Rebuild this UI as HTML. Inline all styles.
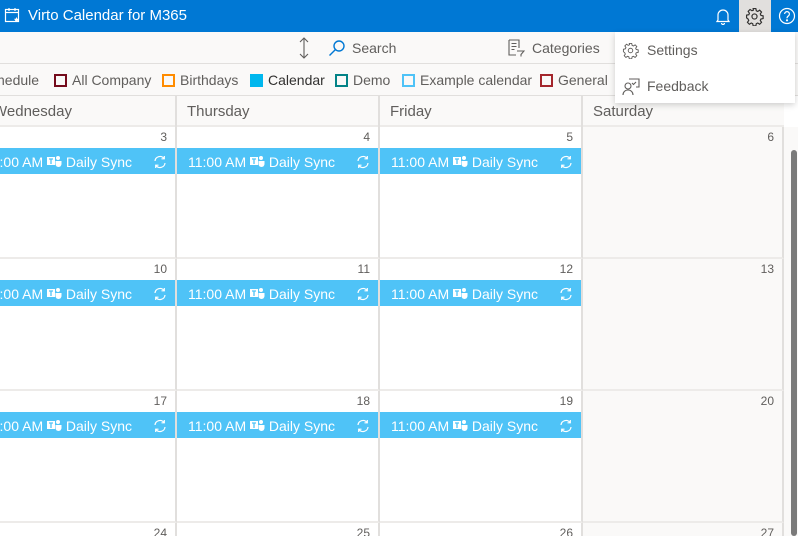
<!DOCTYPE html>
<html><head><meta charset="utf-8"><style>
*{margin:0;padding:0;box-sizing:border-box}
html,body{width:798px;height:536px;overflow:hidden}
body{background:#fff;font-family:"Segoe UI","Liberation Sans",sans-serif;font-size:14px;color:#605e5c;position:relative}
.abs{position:absolute}
.hdr{left:0;top:0;width:798px;height:32px;background:#0078d4;color:#fff}
.tb{left:0;top:32px;width:798px;height:32px;background:#faf9f8;border-bottom:1px solid #e1dfdd}
.lg{left:0;top:64px;width:798px;height:32px;background:#faf9f8;border-bottom:1px solid #e1dfdd}
.dh{left:0;top:96px;width:784px;height:31px;background:#faf9f8;border-bottom:2px solid #edebe9}
.cell{position:absolute;border-right:2px solid #e1dfdd;border-bottom:2px solid #edebe9;background:#fff}
.num{position:absolute;right:8px;top:3px;font-size:12px;color:#605e5c}
.ev{position:absolute;left:0;right:0;top:21px;height:26px;background:#4fc3f7;color:#fff;font-size:14px;line-height:29px;padding-left:11px;white-space:nowrap}
.ev svg.r{position:absolute;right:8px;top:7px}
.sq{display:inline-block;width:13px;height:13px;border:2px solid;vertical-align:-2px;margin-right:5px}
.li{position:absolute;top:72px;white-space:nowrap}
.dn{position:absolute;top:103px;font-size:15px;color:#605e5c}
</style></head><body>
<div class="abs hdr">
<svg class="abs" style="left:4px;top:7px" width="17" height="17" viewBox="0 0 17 17" fill="none" stroke="#fff" stroke-width="1.2"><rect x="1.5" y="2.5" width="13" height="12"/><line x1="1.5" y1="5.5" x2="14.5" y2="5.5"/><line x1="5" y1="1" x2="5" y2="4"/><line x1="11" y1="1" x2="11" y2="4"/><path d="M12.5 10l.8 1.7 1.8.2-1.3 1.2.3 1.8-1.6-.9-1.6.9.3-1.8-1.3-1.2 1.8-.2z" fill="#fff" stroke="none"/></svg>
<div class="abs" style="left:28px;top:7px;font-size:15px;color:#fff">Virto Calendar for M365</div>
<svg class="abs" style="left:715px;top:8px" width="16" height="17" viewBox="0 0 16 17" fill="none" stroke="#fff" stroke-width="1.2"><path d="M3 12V7a5 5 0 0110 0v5l1 1.5H2z"/><path d="M6.5 15a1.5 1.5 0 003 0"/></svg>
<div class="abs" style="left:739px;top:0;width:32px;height:32px;background:#e1dfdd"></div>
<svg class="abs" style="left:745px;top:7px" width="19" height="19" viewBox="0 0 24 24" fill="none" stroke="#323130" stroke-width="1.5"><circle cx="12" cy="12" r="3.2"/><path d="M10.3 2h3.4l.6 2.8 1.8.8 2.4-1.6 2.4 2.4-1.6 2.4.8 1.8 2.8.6v3.4l-2.8.6-.8 1.8 1.6 2.4-2.4 2.4-2.4-1.6-1.8.8-.6 2.8h-3.4l-.6-2.8-1.8-.8-2.4 1.6-2.4-2.4 1.6-2.4-.8-1.8L2 13.7v-3.4l2.8-.6.8-1.8L4 5.5l2.4-2.4 2.4 1.6 1.8-.8z"/></svg>
<svg class="abs" style="left:778px;top:7px" width="18" height="18" viewBox="0 0 18 18" fill="none" stroke="#fff" stroke-width="1.2"><circle cx="9" cy="9" r="7.5"/><path d="M6.6 7a2.4 2.4 0 114 1.8c-1 .7-1.6 1.2-1.6 2.4"/><circle cx="9" cy="13.3" r=".5" fill="#fff"/></svg>
</div>
<div class="abs tb">
<svg class="abs" style="left:298px;top:5px" width="12" height="22" viewBox="0 0 12 22" fill="none" stroke="#605e5c" stroke-width="1.1"><path d="M6 1v20M2 5l4-4 4 4M2 17l4 4 4-4"/></svg>
<svg class="abs" style="left:328px;top:7px" width="18" height="18" viewBox="0 0 18 18" fill="none" stroke="#0078d4" stroke-width="1.4"><circle cx="11" cy="7" r="5"/><path d="M7.5 10.5L1.5 16.5"/></svg>
<div class="abs" style="left:352px;top:8px;color:#605e5c">Search</div>
<svg class="abs" style="left:507px;top:7px" width="18" height="18" viewBox="0 0 18 18" fill="none" stroke="#605e5c" stroke-width="1.1"><path d="M2 1h10v8M2 1v15h7"/><path d="M4.5 4.5h5M4.5 7.5h5M4.5 10.5h3"/><path d="M10 12h7l-3 3.5v2"/></svg>
<div class="abs" style="left:532px;top:8px">Categories</div>
</div>
<div class="abs lg"></div>
<div class="li" style="left:-10px">chedule</div>
<div class="li" style="left:54px"><span class="sq" style="border-color:#750b1c"></span>All Company</div>
<div class="li" style="left:162px"><span class="sq" style="border-color:#ff8c00"></span>Birthdays</div>
<div class="li" style="left:250px;color:#323130"><span class="sq" style="border-color:#00b7ee;background:#00b7ee"></span>Calendar</div>
<div class="li" style="left:335px"><span class="sq" style="border-color:#038387"></span>Demo</div>
<div class="li" style="left:402px"><span class="sq" style="border-color:#4fc3f7"></span>Example calendar</div>
<div class="li" style="left:540px"><span class="sq" style="border-color:#a4262c"></span>General</div>
<div class="abs dh"></div>
<div class="abs" style="left:175px;top:96px;width:2px;height:31px;background:#e1dfdd"></div>
<div class="abs" style="left:378px;top:96px;width:2px;height:31px;background:#e1dfdd"></div>
<div class="abs" style="left:581px;top:96px;width:2px;height:31px;background:#e1dfdd"></div>
<div class="dn" style="left:-7px">Wednesday</div>
<div class="dn" style="left:187px">Thursday</div>
<div class="dn" style="left:390px">Friday</div>
<div class="dn" style="left:593px">Saturday</div>
<div id="g"></div>
<div class="abs" style="left:784px;top:127px;width:14px;height:409px;background:#faf9f8"></div>
<div class="abs" style="left:791px;top:150px;width:6px;height:386px;background:#7a7a7a;border-radius:3px"></div>
<div class="abs" style="left:615px;top:32px;width:180px;height:71px;background:#fff;box-shadow:0 2px 6px rgba(0,0,0,.18)">
<svg class="abs" style="left:7px;top:10px" width="17" height="17" viewBox="0 0 24 24" fill="none" stroke="#605e5c" stroke-width="1.3"><circle cx="12" cy="12" r="3.2"/><path d="M10.3 2h3.4l.6 2.8 1.8.8 2.4-1.6 2.4 2.4-1.6 2.4.8 1.8 2.8.6v3.4l-2.8.6-.8 1.8 1.6 2.4-2.4 2.4-2.4-1.6-1.8.8-.6 2.8h-3.4l-.6-2.8-1.8-.8-2.4 1.6-2.4-2.4 1.6-2.4-.8-1.8L2 13.7v-3.4l2.8-.6.8-1.8L4 5.5l2.4-2.4 2.4 1.6 1.8-.8z"/></svg>
<div class="abs" style="left:32px;top:10px">Settings</div>
<svg class="abs" style="left:7px;top:46px" width="18" height="18" viewBox="0 0 18 18" fill="none" stroke="#605e5c" stroke-width="1.1"><circle cx="6" cy="8" r="3"/><path d="M1 17c0-3 2.2-5 5-5s5 2 5 5"/><path d="M7 1h10v8h-3"/><path d="M10 5l1.5 1.5L14 4"/></svg>
<div class="abs" style="left:32px;top:46px">Feedback</div>
</div>
<script>
var cols=[-26,177,380,583],w=[201,201,201,201],tops=[127,259,391,523],nums=[[3,4,5,6],[10,11,12,13],[17,18,19,20],[24,25,26,27]];
var sync='<svg class="r" width="14" height="14" viewBox="0 0 14 14" fill="none" stroke="#fff" stroke-width="1.2"><path d="M2 6a5 5 0 019-2.5M12 8a5 5 0 01-9 2.5"/><path d="M11.3 1v2.8H8.5M2.7 13v-2.8h2.8"/></svg>';
var teams='<svg width="15" height="13" viewBox="0 0 15 13" style="vertical-align:-1px"><rect x="0" y="2" width="8" height="8" fill="#fff"/><path d="M2 4h4M4 4v5" stroke="#4fc3f7" stroke-width="1.3"/><circle cx="11" cy="3" r="2" fill="#fff"/><path d="M8.5 6h6v3a3 3 0 01-6 0z" fill="#fff"/></svg>';
var h='';
for(var r=0;r<4;r++)for(var c=0;c<4;c++){
var sat=c==3;
h+='<div class="cell" style="left:'+cols[c]+'px;top:'+tops[r]+'px;width:'+(w[c]+(c==3?0:2))+'px;height:'+(r==3?13:132)+'px;overflow:hidden;'+(r==3?'border-bottom:none;':'')+(sat?'background:#faf9f8;':'')+'"><div class="num">'+nums[r][c]+'</div>';
if(!sat&&r<3)h+='<div class="ev">11:00 AM '+teams+' Daily Sync'+sync+'</div>';
h+='</div>';}
document.getElementById('g').innerHTML=h;
</script>
</body></html>
